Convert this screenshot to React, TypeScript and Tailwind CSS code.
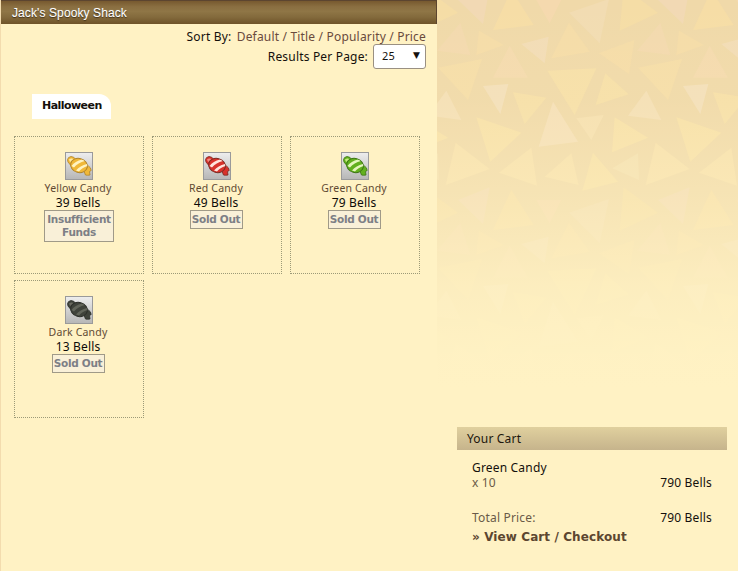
const tris: [string, string][] = [
  ["245,-30 312,75 190,90", "#f6dda6"],
  ["320,0 395,0 360,70", "#f5d9ae"],
  ["418,38 538,-3 510,130", "#f2dcb2"],
  ["582,-38 685,38 570,92", "#f5dda6"],
  ["85,0 180,-38 160,72", "#f2d9b4"],
  ["92,68 122,165 22,152", "#f3d9ae"],
  ["148,92 222,135 140,165", "#f5dca8"],
  ["275,132 357,110 345,190", "#f2dcb6"],
  ["418,68 480,155 365,175", "#f5dca8"],
  ["508,160 614,120 598,222", "#f5dca8"],
  ["240,137 295,233 190,233", "#f4daae"],
  ["25,203 157,177 115,300", "#f5dda8"],
  ["353,212 500,205 435,345", "#f6dfa8"],
  ["527,220 597,283 498,315", "#f6dfa8"],
  ["160,258 236,252 212,342", "#f3dfba"],
  ["250,277 350,293 285,372", "#f6dfa8"],
  ["50,272 95,360 -5,347", "#f4dfb6"],
  ["370,305 445,425 327,440", "#f5dfb8"],
  ["440,355 522,345 485,420", "#f5dfb0"],
  ["140,352 275,398 182,485", "#f7e0a8"],
  ["555,352 655,413 547,457", "#f7e0a8"],
  ["78,428 180,507 48,555", "#f7e0ac"],
  ["208,518 305,443 322,557", "#f7e0ac"],
  ["345,530 425,460 447,555", "#f7e0ac"],
  ["490,458 565,545 458,572", "#f7e0a8"],
  ["548,505 625,460 628,540", "#f3dfb0"],
];

function Backdrop() {
  const xs = [-600, 0, 600, 1200];
  const ys = [0, 600];
  return (
    <svg className="absolute inset-0 w-[308px] h-[571px]" viewBox="22 0 924 1713" preserveAspectRatio="none" aria-hidden="true">
      <defs>
        <linearGradient id="fade" x1="0" y1="0" x2="0" y2="1">
          <stop offset="0" stopColor="#fff2c4" stopOpacity="0" />
          <stop offset="0.18" stopColor="#fff2c4" stopOpacity="0.1" />
          <stop offset="0.34" stopColor="#fff2c4" stopOpacity="0.42" />
          <stop offset="0.5" stopColor="#fff2c4" stopOpacity="0.8" />
          <stop offset="0.62" stopColor="#fff2c4" stopOpacity="0.97" />
          <stop offset="0.68" stopColor="#fff2c4" stopOpacity="1" />
        </linearGradient>
      </defs>
      <rect x="0" y="0" width="960" height="1713" fill="#f0d9a9" />
      {xs.map((dx) =>
        ys.map((dy) => (
          <g key={`${dx}-${dy}`} transform={`translate(${dx} ${dy})`}>
            {tris.map(([p, c]) => (
              <polygon key={p} points={p} fill={c} />
            ))}
          </g>
        ))
      )}
      <rect x="0" y="0" width="960" height="1713" fill="url(#fade)" />
    </svg>
  );
}

function Candy({ id, light, mid, dark, stripe }: { id: string; light: string; mid: string; dark: string; stripe: string }) {
  return (
    <svg width="28" height="28" viewBox="0 0 28 28" className="block" aria-hidden="true">
      <defs>
        <linearGradient id={id} x1="0" y1="0" x2="0" y2="1">
          <stop offset="0" stopColor="#eeeeee" />
          <stop offset="1" stopColor="#b6b6b6" />
        </linearGradient>
        <clipPath id={`${id}c`}>
          <ellipse cx="14" cy="13.5" rx="8.5" ry="7" transform="rotate(15 14 13.5)" />
        </clipPath>
      </defs>
      <rect x="0.5" y="0.5" width="27" height="27" fill={`url(#${id})`} stroke="#9a9a9a" />
      <path d="M2.5 7.5 Q3 5 6 4.5 Q9 4.5 11 7.5 L8 13 Q5 13.5 4 11.5 Q2.5 10 2.5 7.5 Z" fill={mid} stroke={dark} strokeWidth="0.8" />
      <path d="M18.5 18 L23.5 14 Q26 15.5 26.2 18.5 L24.5 19.5 L25 23 Q22 23.5 20.5 23 Z" fill={mid} stroke={dark} strokeWidth="0.8" />
      <path d="M4 7.5 Q5.5 6 7.5 6.5 L8 8 L5 10 Z" fill={light} />
      <ellipse cx="14" cy="13.5" rx="8.5" ry="7" transform="rotate(15 14 13.5)" fill={mid} stroke={dark} strokeWidth="1" />
      <g clipPath={`url(#${id}c)`}>
        <path d="M6.5 14 Q10 9 17 7.5 L20 9 Q13 10.5 9 15.5 Z" fill={stripe} />
        <path d="M11 18.5 Q15 13.5 22 12 L22.5 14 Q17 15.5 14 19.5 Z" fill={stripe} />
      </g>
    </svg>
  );
}

type P = { name: string; price: string; btn: string[]; btnW: string; c: { light: string; mid: string; dark: string; stripe: string } };

const products: P[] = [
  { name: "Yellow Candy", price: "39 Bells", btn: ["Insufficient", "Funds"], btnW: "w-[70px]", c: { light: "#ffe9a0", mid: "#f0b838", dark: "#b0842a", stripe: "#fff3c0" } },
  { name: "Red Candy", price: "49 Bells", btn: ["Sold Out"], btnW: "w-[53px] -translate-x-[1px]", c: { light: "#f58a80", mid: "#d8322b", dark: "#7a2a22", stripe: "#ffe4dc" } },
  { name: "Green Candy", price: "79 Bells", btn: ["Sold Out"], btnW: "w-[53px] -translate-x-[1px]", c: { light: "#c8ee80", mid: "#62b01e", dark: "#3c7414", stripe: "#e4f6bc" } },
  { name: "Dark Candy", price: "13 Bells", btn: ["Sold Out"], btnW: "w-[53px] -translate-x-[1px]", c: { light: "#6a6a60", mid: "#3f423a", dark: "#2c2e28", stripe: "#62655a" } },
];

function Product({ p, i }: { p: P; i: number }) {
  return (
    <div className="w-[130px] h-[138px] border border-dotted border-[#9c9a78] flex flex-col items-center pt-[15px]">
      <Candy id={`bg${i}`} {...p.c} />
      <div className="mt-[1px] h-[15px] leading-[15px] text-[10.5px] text-[#5f4a33] -translate-x-[1px] whitespace-nowrap">{p.name}</div>
      <div className="h-[14px] leading-[14px] text-[12px] text-[#0c0a08] -translate-x-[1px] whitespace-nowrap tracking-[0.15px]">{p.price}</div>
      <div className={`${p.btnW} border border-[#a09a88] bg-[#f9f0d8] text-center text-[10.5px] leading-[13px] font-bold text-[#7d7f86] py-[2px]`} style={{ fontFamily: '"DejaVu Sans", sans-serif' }}>
        {p.btn.map((b) => (
          <div key={b} className="whitespace-nowrap tracking-[-0.3px]">{b}</div>
        ))}
      </div>
    </div>
  );
}

export default function App() {
  return (
    <div className="w-[738px] h-[571px] overflow-hidden flex bg-[#fff2c4] text-[12px] text-[#14100c] tracking-[0.18px]" style={{ fontFamily: '"Noto Sans", "DejaVu Sans", sans-serif' }}>
      <div className="w-[1px] bg-[#f3dcae]" />
      <main className="w-[436px] flex flex-col">
        <header className="h-[24px] flex items-center pl-[11px] border-t border-r border-[#5c4530] bg-[linear-gradient(180deg,#77592f_0%,#8a6f41_25%,#8f7646_45%,#836a3c_70%,#6f5429_100%)]">
          <span className="text-[12px] text-white tracking-[0.1px]" style={{ fontFamily: '"Liberation Sans", sans-serif', textShadow: "0 1px 1px #3d2c14, 0 0 1px #ffffff66" }}>Jack's Spooky Shack</span>
        </header>
        <div className="flex flex-col items-end pr-[11px] pt-[4px]">
          <div className="h-[17px] leading-[17px] whitespace-nowrap">
            Sort By:{" "}
            <span className="text-[#6a4a3c] ml-[2px]">Default / Title / Popularity / Price</span>
          </div>
          <div className="flex items-center gap-[5px] -mt-[1px]">
            <span>Results Per Page:</span>
            <div className="w-[53px] h-[25px] bg-white rounded-[3px] border border-[#9a9082] flex items-center justify-between pl-[8px] pr-[5px] text-[11px]">
              <span>25</span>
              <span className="text-[9px] leading-none -mt-[3px]" style={{ fontFamily: '"DejaVu Sans", sans-serif' }}>▼</span>
            </div>
          </div>
        </div>
        <div className="pl-[31px] mt-[25px]">
          <div className="w-[79px] h-[25px] bg-white rounded-tr-[12px] flex items-center pl-[10px] text-[11px] font-bold text-[#14100c]" style={{ fontFamily: '"DejaVu Sans", sans-serif', letterSpacing: "-0.55px" }}>Halloween</div>
        </div>
        <div className="pl-[13px] mt-[17px] flex flex-wrap gap-x-[8px] gap-y-[6px]">
          {products.map((p, i) => (
            <Product key={p.name} p={p} i={i} />
          ))}
        </div>
      </main>
      <aside className="relative w-[301px] pl-[20px] pr-[11px] pt-[427px]">
        <Backdrop />
        <div className="relative">
          <div className="h-[23px] leading-[23px] pl-[10px] bg-[linear-gradient(180deg,#e0d09e,#c6b48c)] text-[#20160c]">Your Cart</div>
          <div className="pl-[15px] pr-[15px] pt-[10px]">
            <div className="leading-[15px]">Green Candy</div>
            <div className="flex justify-between leading-[15px]">
              <span className="text-[#6a5a48]">x 10</span>
              <span>790 Bells</span>
            </div>
            <div className="flex justify-between leading-[15px] mt-[20px]">
              <span className="text-[#6a5a48]">Total Price:</span>
              <span>790 Bells</span>
            </div>
            <div className="mt-[4px] leading-[16px] text-[12px] font-bold text-[#5c4630] whitespace-nowrap tracking-[0.1px]" style={{ fontFamily: '"DejaVu Sans", sans-serif' }}>» View Cart / Checkout</div>
          </div>
        </div>
      </aside>
    </div>
  );
}
